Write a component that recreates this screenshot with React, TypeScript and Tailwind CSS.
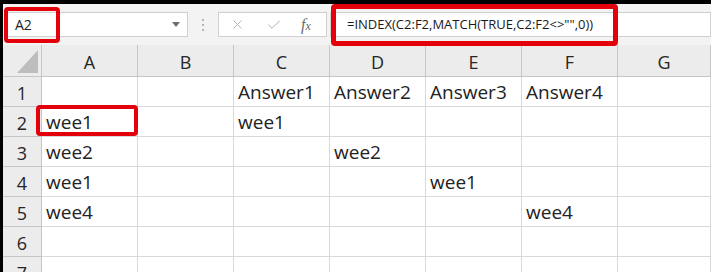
import { X, Check } from 'lucide-react';

const cols = ['A', 'B', 'C', 'D', 'E', 'F', 'G'];

const rows: string[][] = [
  ['', '', 'Answer1', 'Answer2', 'Answer3', 'Answer4', ''],
  ['wee1', '', 'wee1', '', '', '', ''],
  ['wee2', '', '', 'wee2', '', '', ''],
  ['wee1', '', '', '', 'wee1', '', ''],
  ['wee4', '', '', '', '', 'wee4', ''],
  ['', '', '', '', '', '', ''],
  ['', '', '', '', '', '', ''],
];

function RedBox({ className }: { className: string }) {
  return <div className={`absolute border-[#e3000b] rounded-[4px] pointer-events-none ${className}`} />;
}

export default function App() {
  return (
    <div className="w-[711px] h-[272px] overflow-hidden bg-black pl-[3px] pt-[4px] font-['Open_Sans',sans-serif] text-[#222]">
      <div className="bg-white h-full">
        {/* formula toolbar */}
        <div className="h-[41px] bg-[#f3f3f3] flex items-center pb-[8px] pt-[8px]">
          <div className="relative ml-[2px] w-[183px] h-[25px] bg-white border border-[#d0d0d0] flex items-center pl-[9px] text-[14px]">
            <span>A2</span>
            <svg className="absolute right-[7px] top-[9px]" width="8" height="5" viewBox="0 0 8 5">
              <path d="M0 0h8L4 5z" fill="#6e6e6e" />
            </svg>
            <RedBox className="border-[4px] -left-[2px] -top-[6px] w-[56px] h-[36px]" />
          </div>
          <div className="w-[30px] flex flex-col items-center gap-[3px]">
            <span className="w-[2px] h-[2px] bg-[#b5b5b5]" />
            <span className="w-[2px] h-[2px] bg-[#b5b5b5]" />
            <span className="w-[2px] h-[2px] bg-[#b5b5b5]" />
          </div>
          <div className="w-[109px] h-[25px] bg-white border border-[#d0d0d0] flex items-center pl-[11px]">
            <X className="w-[15px] h-[15px] text-[#b0b0b0]" strokeWidth={1.5} />
            <Check className="w-[16px] h-[16px] ml-[21px] text-[#b0b0b0]" strokeWidth={1.5} />
            <span className="ml-[19px] font-['Liberation_Serif',serif] italic text-[16px] text-[#6a6a6a] leading-none">
              f<span className="text-[12px]">x</span>
            </span>
          </div>
          <div className="relative ml-[3px] flex-1 h-[25px] bg-white border border-[#d0d0d0] flex items-center pl-[16px] text-[13px] text-[#1a1a1a]">
            <span>=INDEX(C2:F2,MATCH(TRUE,C2:F2&lt;&gt;"",0))</span>
            <RedBox className="border-[5px] left-[0px] -top-[9px] w-[287px] h-[42px]" />
          </div>
        </div>

        {/* sheet grid */}
        <div className="grid grid-cols-[39px_repeat(6,96px)_1fr]">
          <div className="relative h-[32px] bg-[#ececec] border-r border-b border-[#c6c6c6]">
            <svg className="absolute left-[14px] top-[5px]" width="21" height="23" viewBox="0 0 21 23">
              <path d="M21 0V23H0z" fill="#bdbdbd" />
            </svg>
          </div>
          {cols.map((c) => (
            <div
              key={c}
              className="h-[32px] bg-[#ececec] border-r border-b border-[#c6c6c6] flex items-center justify-center pt-[3px] text-[18px] text-[#262626]"
            >
              {c}
            </div>
          ))}
          {rows.map((r, i) => (
            <div key={i} className="contents">
              <div className="h-[30px] bg-[#ececec] border-r border-b border-[#c6c6c6] flex items-center justify-center pt-[3px] text-[18px] text-[#262626]">
                {i + 1}
              </div>
              {r.map((v, j) => (
                <div
                  key={j}
                  className="relative h-[30px] border-r border-b border-[#d9d9d9] flex items-center pl-[4px] pt-[2px] text-[19px] whitespace-nowrap"
                >
                  {v}
                  {i === 1 && j === 0 && (
                    <RedBox className="border-[4px] -left-[6px] -top-[2px] w-[102px] h-[31px]" />
                  )}
                </div>
              ))}
            </div>
          ))}
        </div>
      </div>
    </div>
  );
}
